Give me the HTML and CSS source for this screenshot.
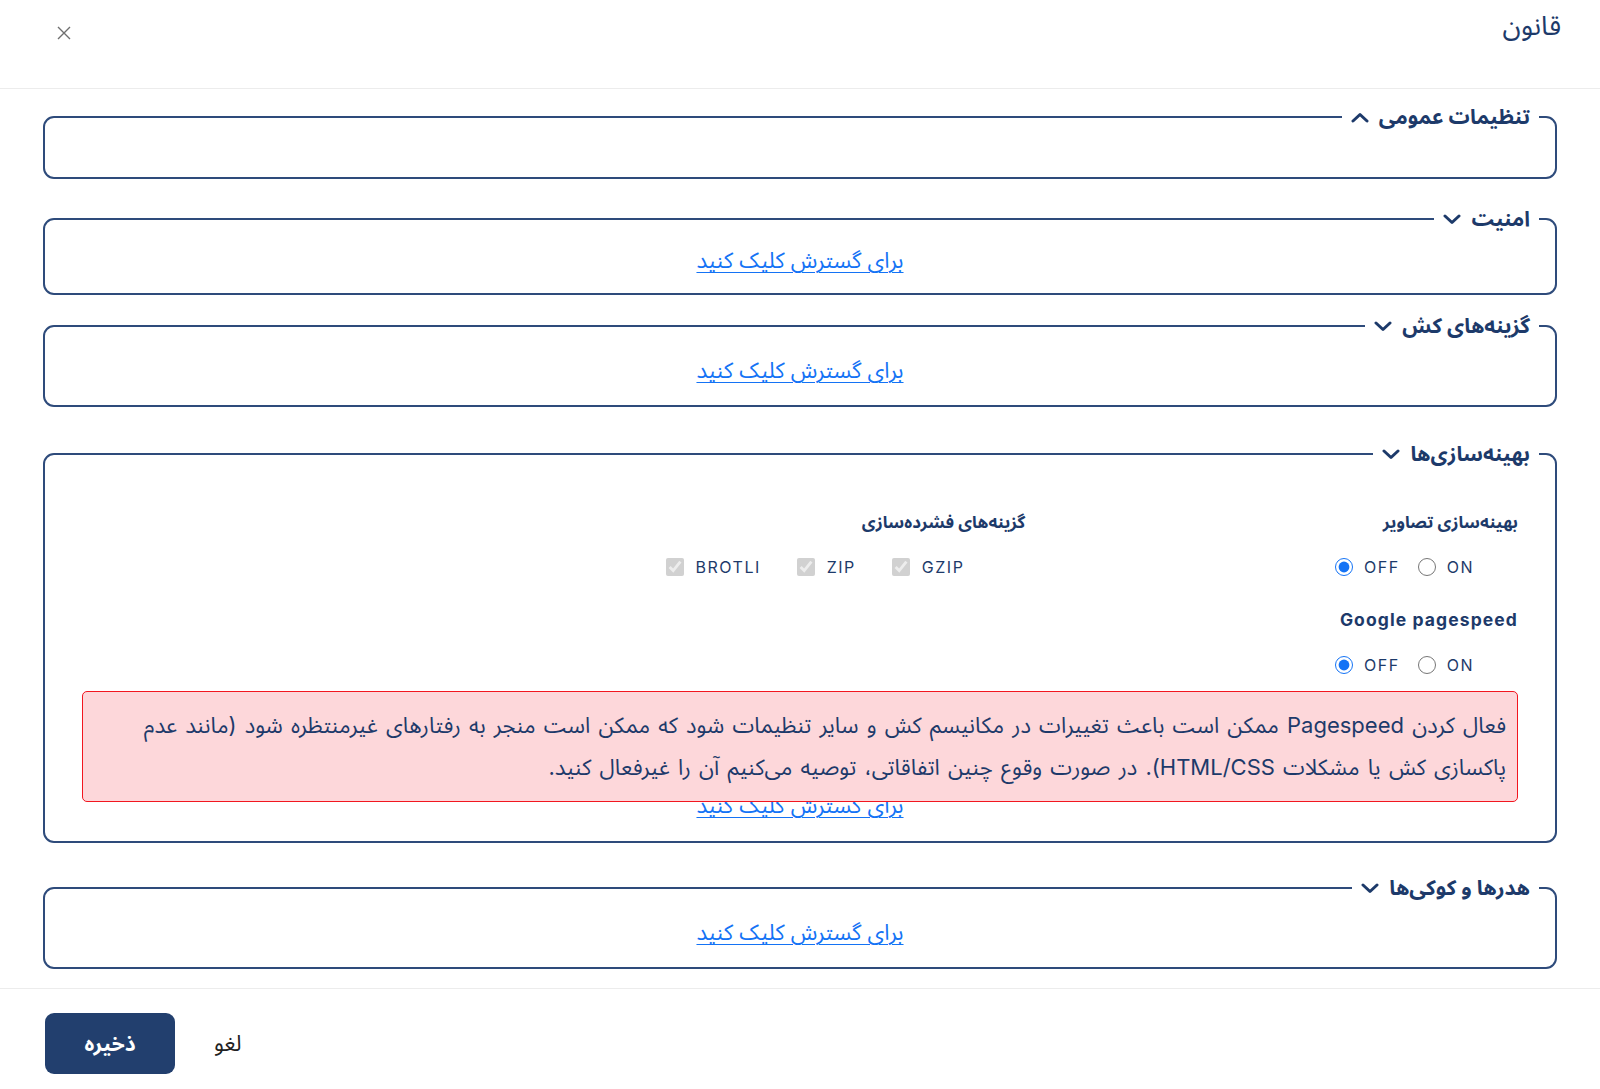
FILE: index.html
```html
<!DOCTYPE html>
<html lang="fa" dir="rtl">
<head>
<meta charset="UTF-8" />
<meta name="viewport" content="width=device-width, initial-scale=1.0" />
<title>قانون</title>
<link rel="stylesheet" href="styles.css">
</head>
<body>

<div class="modal">
  <!-- Шапка окна -->
  <div class="modal-header">
    <h5 class="modal-title">قانون</h5>
    <button class="btn-close" type="button" aria-label="بستن">
      <svg width="14" height="14" viewBox="0 0 14 14"><path d="M1 1L13 13M13 1L1 13" stroke="#6f6f6f" stroke-width="1.4" fill="none"/></svg>
    </button>
  </div>

  <div class="modal-body">

    <fieldset class="group group-general">
      <legend>
        <span class="legend-inner">تنظیمات عمومی
          <svg class="caret" viewBox="0 0 18 11"><path d="M2 9L9 2.5L16 9" /></svg>
        </span>
      </legend>
      <div class="group-body empty"></div>
    </fieldset>

    <fieldset class="group group-security">
      <legend>
        <span class="legend-inner">امنیت
          <svg class="caret" viewBox="0 0 18 11"><path d="M2 2L9 8.5L16 2" /></svg>
        </span>
      </legend>
      <div class="group-body"><a href="#" class="expand">برای گسترش کلیک کنید</a></div>
    </fieldset>

    <fieldset class="group">
      <legend>
        <span class="legend-inner">گزینه‌های کش
          <svg class="caret" viewBox="0 0 18 11"><path d="M2 2L9 8.5L16 2" /></svg>
        </span>
      </legend>
      <div class="group-body"><a href="#" class="expand">برای گسترش کلیک کنید</a></div>
    </fieldset>

    <fieldset class="group group-optimize">
      <legend>
        <span class="legend-inner">بهینه‌سازی‌ها
          <svg class="caret" viewBox="0 0 18 11"><path d="M2 2L9 8.5L16 2" /></svg>
        </span>
      </legend>
      <div class="group-body optimize">
        <div class="options">
          <div class="opt-col">
            <div class="opt-title">بهینه‌سازی تصاویر</div>
            <div class="radio-row">
              <label class="opt"><input type="radio" name="img"> ON</label>
              <label class="opt"><input type="radio" name="img" checked> OFF</label>
            </div>
            <div class="opt-title latin">Google pagespeed</div>
            <div class="radio-row">
              <label class="opt"><input type="radio" name="ps"> ON</label>
              <label class="opt"><input type="radio" name="ps" checked> OFF</label>
            </div>
          </div>
          <div class="opt-col">
            <div class="opt-title">گزینه‌های فشرده‌سازی</div>
            <div class="check-row">
              <label class="opt"><input type="checkbox" checked disabled> GZIP</label>
              <label class="opt"><input type="checkbox" checked disabled> ZIP</label>
              <label class="opt"><input type="checkbox" checked disabled> BROTLI</label>
            </div>
          </div>
          <div class="opt-col"></div>
        </div>

        <div class="alert">فعال کردن Pagespeed ممکن است باعث تغییرات در مکانیسم کش و سایر تنظیمات شود که ممکن است منجر به رفتارهای غیرمنتظره شود (مانند عدم پاکسازی کش یا مشکلات HTML/CSS). در صورت وقوع چنین اتفاقاتی، توصیه می‌کنیم آن را غیرفعال کنید.</div>
        <a href="#" class="expand under-alert">برای گسترش کلیک کنید</a>
      </div>
    </fieldset>

    <fieldset class="group">
      <legend>
        <span class="legend-inner">هدرها و کوکی‌ها
          <svg class="caret" viewBox="0 0 18 11"><path d="M2 2L9 8.5L16 2" /></svg>
        </span>
      </legend>
      <div class="group-body"><a href="#" class="expand">برای گسترش کلیک کنید</a></div>
    </fieldset>

  </div>

  <!-- Кнопки -->
  <div class="modal-footer">
    <button type="button" class="btn-cancel">لغو</button>
    <button type="button" class="btn-save">ذخیره</button>
  </div>
</div>

</body>
</html>
```

FILE: styles.css
```css
/* Общие стили */
body {
  margin: 0;
  font-family: "Inter", "Noto Sans Arabic", "DejaVu Sans", sans-serif;
  color: #1d3a6a;
  background: #fff;
}

.modal {
  width: 100%;
}

/* Шапка */
.modal-header {
  height: 89px;
  box-sizing: border-box;
  padding: 7px 39px 0 50px;
  display: flex;
  justify-content: space-between;
  align-items: flex-start;
  border-bottom: 1px solid #ececec;
}
.modal-title {
  margin: 0;
  font-size: 27px;
  line-height: 38px;
  font-weight: 400;
  color: #1d3a6a;
}
.btn-close {
  border: none;
  background: none;
  padding: 0;
  margin-top: 19px;
  width: 28px;
  height: 14px;
  display: flex;
  justify-content: center;
  cursor: pointer;
}

/* Тело */
.modal-body {
  padding: 13px 43px 19px;
}

/* Группы настроек */
.group {
  margin: 0 0 32px;
  padding: 0 16px;
  border: 2px solid #2e4b7b;
  border-radius: 11px;
  min-width: 0;
}
.group:last-child { margin-bottom: 0; }
.group-general { margin-bottom: 25px; }
.group-security { margin-bottom: 16px; }
.group-optimize { margin-bottom: 30px; }

.group legend {
  padding: 0 9px;
  font-size: 21px;
  line-height: 30px;
  font-weight: 700;
  color: #1d3a6a;
}
.legend-inner {
  display: inline-flex;
  align-items: center;
  gap: 10px;
}
.caret {
  width: 18px;
  height: 11px;
  fill: none;
  stroke: #1d3a6a;
  stroke-width: 3;
  stroke-linecap: round;
  stroke-linejoin: round;
}

.group-body {
  padding: 14px 21px 20px;
  text-align: center;
}
.group-security .group-body {
  padding-top: 11px;
  padding-bottom: 18px;
}
.group-body.empty {
  padding: 0;
  height: 45px;
}
.group-body.optimize {
  padding-bottom: 21px;
}

.expand {
  font-size: 22px;
  line-height: 30px;
  color: #1473f5;
  text-decoration: underline;
  text-underline-offset: 4px;
  text-decoration-thickness: 1px;
}
/* ссылка под предупреждением частично перекрыта им */
.under-alert {
  display: block;
  width: max-content;
  margin: -12px auto 0;
}

/* Опции оптимизации */
.options {
  display: grid;
  grid-template-columns: repeat(3, 1fr);
  column-gap: 24px;
  margin-top: 27px;
  text-align: right;
}
.opt-title {
  font-size: 17px;
  line-height: 24px;
  font-weight: 700;
  margin-bottom: 21px;
}
.opt-title.latin {
  margin-top: 29px;
  font-size: 17.5px;
  letter-spacing: 1.1px;
}
.opt-col:nth-child(2) .opt-title {
  padding-right: 6px;
}

.radio-row,
.check-row {
  display: flex;
  height: 24px;
  align-items: center;
}
.radio-row {
  gap: 18px;
  padding-right: 44px;
}
.check-row {
  gap: 36px;
  padding-right: 67px;
}
.opt {
  direction: ltr;
  display: inline-flex;
  align-items: center;
  gap: 12px;
  font-size: 16px;
  letter-spacing: 1.5px;
  color: #1d3a6a;
}
.radio-row .opt {
  gap: 11px;
}
.opt input {
  margin: 0;
  width: 18px;
  height: 18px;
  accent-color: #1473f5;
}

/* Предупреждение */
.alert {
  position: relative;
  z-index: 1;
  margin-top: 14px;
  padding: 12px 11px 13px;
  background: #fdd7da;
  border: 1px solid #f2161f;
  border-radius: 5px;
  font-size: 22px;
  line-height: 42px;
  word-spacing: 2px;
  text-align: right;
  color: #1d3a6a;
}

/* Подвал */
.modal-footer {
  border-top: 1px solid #ececec;
  padding: 24px 45px 15px;
  display: flex;
  justify-content: flex-end;
  align-items: center;
  gap: 39px;
}
.btn-save {
  width: 130px;
  height: 61px;
  border: none;
  border-radius: 9px;
  background: #223f6e;
  color: #fff;
  font-family: inherit;
  font-size: 21px;
  font-weight: 700;
  cursor: pointer;
}
.btn-cancel {
  border: none;
  background: none;
  padding: 0;
  font-family: inherit;
  font-size: 22px;
  color: #222;
  cursor: pointer;
}
```
